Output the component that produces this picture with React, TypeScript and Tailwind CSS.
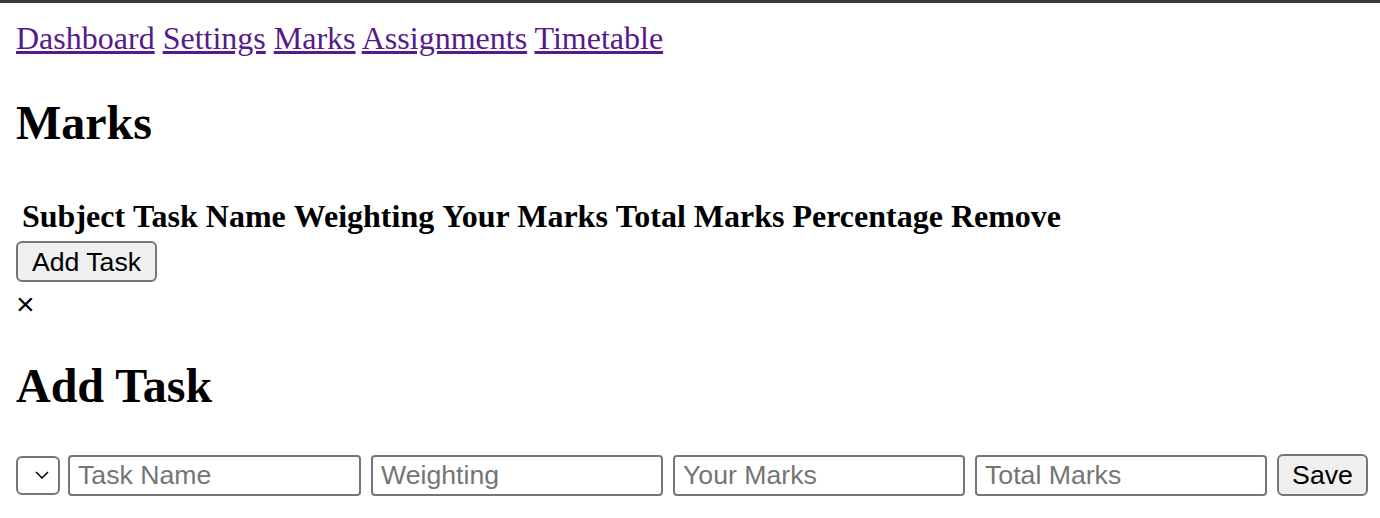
import { useState } from "react";

const links = ["Dashboard", "Settings", "Marks", "Assignments", "Timetable"];
const headers = [
  "Subject",
  "Task Name",
  "Weighting",
  "Your Marks",
  "Total Marks",
  "Percentage",
  "Remove",
];
const fields = [
  { name: "taskName", placeholder: "Task Name" },
  { name: "weighting", placeholder: "Weighting" },
  { name: "yourMarks", placeholder: "Your Marks" },
  { name: "totalMarks", placeholder: "Total Marks" },
];

export default function App() {
  const [formData, setFormData] = useState<Record<string, string>>({
    taskName: "",
    weighting: "",
    yourMarks: "",
    totalMarks: "",
  });

  const handleChange = (e: React.ChangeEvent<HTMLInputElement>) => {
    const { name, value } = e.target;
    setFormData((prev) => ({ ...prev, [name]: value }));
  };

  return (
    <div className="min-h-screen bg-white text-black font-['Liberation_Serif','Times_New_Roman',serif]">
      <div className="h-[3px] bg-[#3a3a3a]" />
      <div className="px-4 pt-[17px]">
        <nav className="h-[36px] text-[32px] leading-[36px] whitespace-nowrap">
          {links.map((l, i) => (
            <span key={l}>
              <a href="#" className="text-[#551a8b] underline">
                {l}
              </a>
              {i < links.length - 1 ? " " : ""}
            </span>
          ))}
        </nav>

        <h2 className="mt-10 text-[48px] leading-[53px] font-bold">Marks</h2>

        <table className="mt-[43px] border-separate border-spacing-[4px]">
          <thead>
            <tr>
              {headers.map((h) => (
                <th
                  key={h}
                  className="p-[2px] text-[32px] leading-[36px] font-bold whitespace-nowrap"
                >
                  {h}
                </th>
              ))}
            </tr>
          </thead>
          <tbody></tbody>
        </table>

        <button className="mt-[1px] flex h-[41px] w-[141px] items-center justify-center rounded-[6px] border-2 border-[#767676] bg-[#efefef] text-[26.67px] font-['Liberation_Sans',Arial,sans-serif]">
          Add Task
        </button>

        <div className="h-[36px] pt-[6px] text-[32px] leading-[32px] font-['Liberation_Sans',Arial,sans-serif]">
          ×
        </div>

        <h2 className="mt-[41px] text-[48px] leading-[53px] font-bold">Add Task</h2>

        <form
          className="mt-[42px] flex items-center font-['Liberation_Sans',Arial,sans-serif]"
          onSubmit={(e) => e.preventDefault()}
        >
          <div className="flex h-[39px] w-[44px] shrink-0 items-center justify-end rounded-[6px] border-2 border-[#767676] pr-[9px]">
            <svg width="14" height="8" viewBox="0 0 14 8" fill="none">
              <path d="M1 1l6 6 6-6" stroke="#000" strokeWidth="1.5" />
            </svg>
          </div>
          {fields.map((f, i) => (
            <input
              key={f.name}
              name={f.name}
              value={formData[f.name]}
              onChange={handleChange}
              placeholder={f.placeholder}
              className={`${i === 0 ? "ml-[8px] w-[293px]" : "ml-[10px] w-[292px]"} h-[41px] shrink-0 rounded-[4px] border-2 border-[#767676] px-[8px] text-[26.67px] outline-none placeholder:text-[#757575]`}
            />
          ))}
          <button
            type="submit"
            className="ml-[10px] flex h-[42px] w-[91px] shrink-0 items-center justify-center rounded-[6px] border-2 border-[#767676] bg-[#efefef] text-[26.67px]"
          >
            Save
          </button>
        </form>
      </div>
    </div>
  );
}
